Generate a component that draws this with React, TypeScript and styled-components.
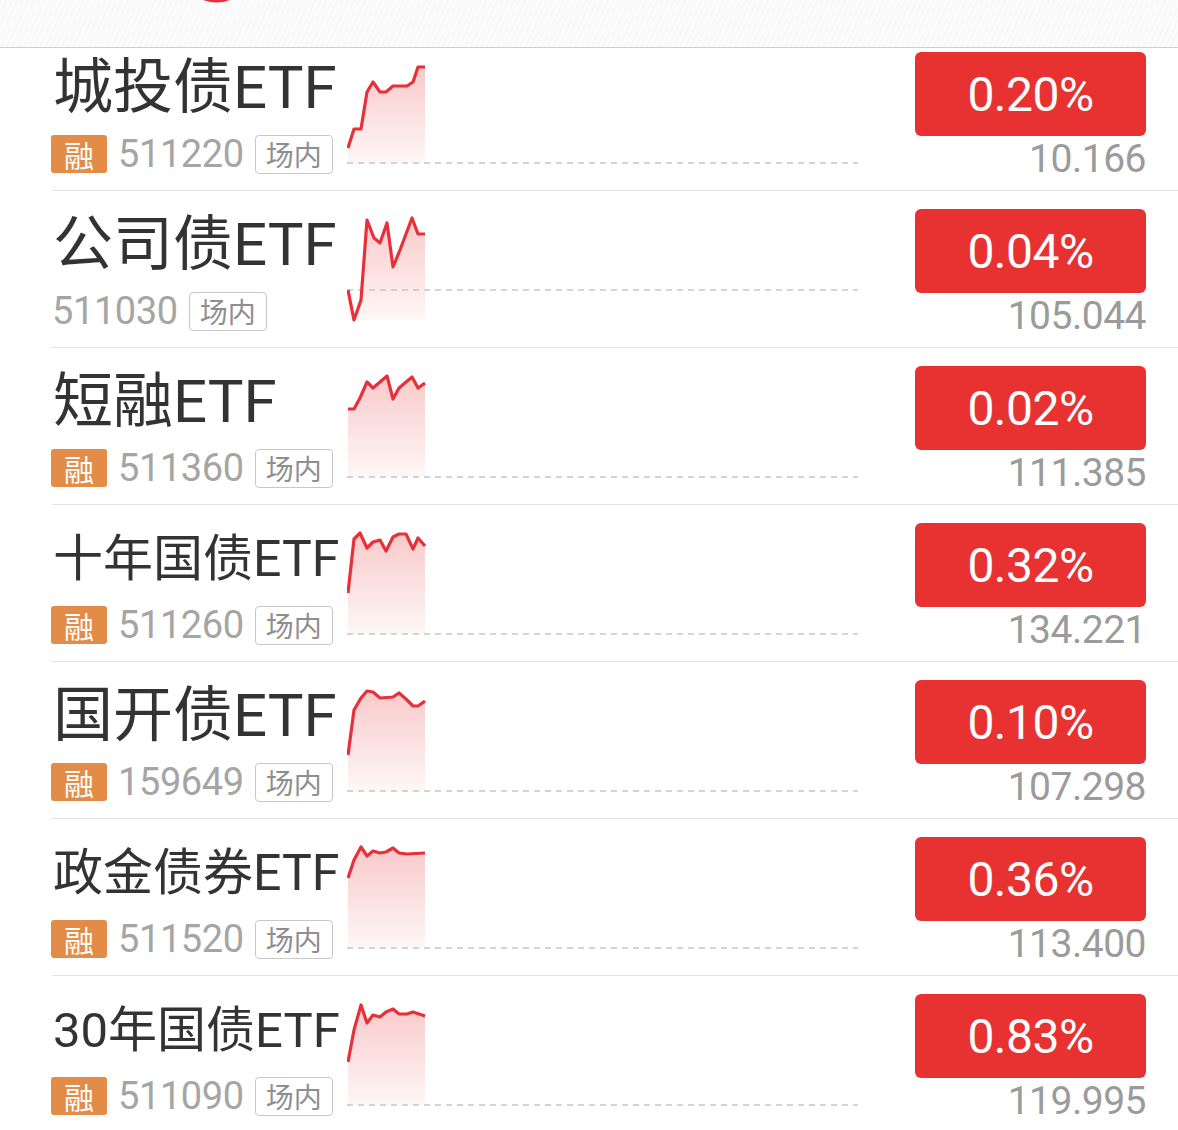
import React from 'react';
import styled, {createGlobalStyle} from 'styled-components';

const GlobalStyle = createGlobalStyle`
  html, body {
    margin: 0;
    padding: 0;
    background: #ffffff;
    overflow: hidden;
  }
  body {
    font-family: Roboto, 'Noto Sans CJK SC', sans-serif;
  }
`;

const Page = styled.div`
  width: 1178px;
  height: 1130px;
  overflow: hidden;
  display: flex;
  flex-direction: column;
  background: #fff;
`;

const Header = styled.div`
  flex-shrink: 0;
  height: 47px;
  border-bottom: 1px solid #cfcfcf;
  padding-left: 203px;
  background-color: #fcfcfc;
  background-image: repeating-linear-gradient(115deg, rgba(0, 0, 0, 0.012) 0, rgba(0, 0, 0, 0.012) 2px, transparent 2px, transparent 5px);
`;

const Viewport = styled.div`
  flex: 1;
  overflow: hidden;
`;

const List = styled.div`
  margin-top: -14px;
  margin-left: 52px;
`;

const Row = styled.div`
  height: 156px;
  border-bottom: 1px solid #e3e3e3;
  display: grid;
  grid-template-columns: 295px 511px 1fr;
`;

const Left = styled.div`
  padding-top: 14px;
  display: flex;
  flex-direction: column;
`;

const Title = styled.div<{$size: number}>`
  height: 80px;
  display: flex;
  align-items: center;
  margin-left: 1px;
  font-size: ${p => p.$size}px;
  line-height: 1;
  color: #333333;
  white-space: nowrap;
`;

const CodeLine = styled.div`
  margin-top: 6px;
  height: 40px;
  display: flex;
  align-items: center;
  gap: 11px;
`;

const Badge = styled.span`
  width: 56px;
  height: 38px;
  border-radius: 3px;
  background: #e38c47;
  color: #fff;
  font-size: 30px;
  display: flex;
  align-items: center;
  justify-content: center;
  margin-left: -1px;
`;

const Code = styled.span`
  font-size: 38px;
  letter-spacing: -0.4px;
  color: #a5a5a5;
  line-height: 1;
`;

const Tag = styled.span`
  box-sizing: border-box;
  width: 78px;
  height: 39px;
  border: 1.5px solid #c8c8c8;
  border-radius: 4px;
  color: #8e8e8e;
  font-size: 28px;
  display: flex;
  align-items: center;
  justify-content: center;
`;

const ChartBox = styled.svg`
  display: block;
  width: 511px;
  height: 156px;
`;

const Right = styled.div`
  padding-top: 18px;
  padding-right: 32px;
  display: flex;
  flex-direction: column;
  align-items: flex-end;
`;

const Change = styled.div`
  width: 231px;
  height: 84px;
  border-radius: 6px;
  background: #e83232;
  color: #fff;
  font-size: 48px;
  letter-spacing: -0.5px;
  display: flex;
  align-items: center;
  justify-content: center;
`;

const Price = styled.div`
  margin-top: 1px;
  font-size: 39px;
  line-height: 44px;
  letter-spacing: -0.5px;
  color: #9b9b9b;
`;

type Item = {
  name: string;
  size: number;
  code: string;
  margin: boolean;
  change: string;
  price: string;
  base: number;
  pts: [number, number][];
};

const items: Item[] = [
  {
    name: '城投债ETF', size: 60, code: '511220', margin: true, change: '0.20%', price: '10.166', base: 129,
    pts: [[0, 114], [6, 95], [13, 95], [19, 58], [25, 48], [32, 58], [38, 58], [45, 52], [59, 52], [65, 48], [70, 33], [77, 33]],
  },
  {
    name: '公司债ETF', size: 60, code: '511030', margin: false, change: '0.04%', price: '105.044', base: 99,
    pts: [[0, 99], [6, 129], [13, 109], [19, 29], [26, 47], [32, 52], [39, 32], [45, 76], [52, 59], [64, 27], [70, 43], [77, 43]],
  },
  {
    name: '短融ETF', size: 60, code: '511360', margin: true, change: '0.02%', price: '111.385', base: 129,
    pts: [[0, 61], [6, 61], [12, 50], [19, 34], [25, 40], [32, 34], [39, 28], [45, 51], [51, 40], [64, 29], [70, 40], [77, 35]],
  },
  {
    name: '十年国债ETF', size: 50, code: '511260', margin: true, change: '0.32%', price: '134.221', base: 129,
    pts: [[0, 88], [6, 34], [12, 28], [19, 43], [25, 37], [32, 35], [38, 46], [45, 32], [51, 29], [58, 29], [65, 44], [70, 33], [77, 41]],
  },
  {
    name: '国开债ETF', size: 60, code: '159649', margin: true, change: '0.10%', price: '107.298', base: 129,
    pts: [[0, 93], [6, 48], [13, 36], [19, 29], [25, 30], [32, 36], [45, 35], [51, 31], [58, 37], [65, 44], [70, 44], [77, 39]],
  },
  {
    name: '政金债券ETF', size: 50, code: '511520', margin: true, change: '0.36%', price: '113.400', base: 129,
    pts: [[0, 59], [6, 41], [13, 28], [19, 37], [25, 32], [32, 34], [38, 33], [45, 29], [51, 34], [59, 35], [77, 34]],
  },
  {
    name: '30年国债ETF', size: 49, code: '511090', margin: true, change: '0.83%', price: '119.995', base: 129,
    pts: [[0, 86], [6, 54], [13, 29], [19, 47], [25, 39], [32, 41], [38, 36], [45, 33], [51, 38], [59, 38], [65, 36], [77, 40]],
  },
];

const Spark: React.FC<{pts: [number, number][]; base: number; id: string}> = ({pts, base, id}) => {
  const line = pts.map(([x, y], i) => `${i ? 'L' : 'M'}${x + 1} ${y}`).join(' ');
  const last = pts[pts.length - 1];
  const area = `${line} L${last[0] + 1} 129 L1 129 Z`;
  return (
    <ChartBox viewBox="0 0 511 156">
      <defs>
        <linearGradient id={id} x1="0" y1="0" x2="0" y2="1">
          <stop offset="0" stopColor="#e83232" stopOpacity="0.26" />
          <stop offset="1" stopColor="#e83232" stopOpacity="0.04" />
        </linearGradient>
      </defs>
      <path d={area} fill={`url(#${id})`} />
      <line x1="0" y1={base} x2="511" y2={base} stroke="#c6c6c6" strokeWidth="1.6" strokeDasharray="6 5" />
      <path d={line} fill="none" stroke="#e8303a" strokeWidth="3.2" strokeLinejoin="round" />
    </ChartBox>
  );
};

const App: React.FC = () => {
  return (
    <Page>
      <GlobalStyle />
      <Header>
        <svg width="27" height="3" viewBox="0 0 27 3" style={{display: 'block'}}>
          <path d="M0 0 Q13.5 5 27 0 Z" fill="#e8303a" />
        </svg>
      </Header>
      <Viewport>
        <List>
          {items.map((it, i) => (
            <Row key={it.code}>
              <Left>
                <Title $size={it.size}>{it.name}</Title>
                <CodeLine>
                  {it.margin && <Badge>融</Badge>}
                  <Code>{it.code}</Code>
                  <Tag>场内</Tag>
                </CodeLine>
              </Left>
              <Spark pts={it.pts} base={it.base} id={`g${i}`} />
              <Right>
                <Change>{it.change}</Change>
                <Price>{it.price}</Price>
              </Right>
            </Row>
          ))}
        </List>
      </Viewport>
    </Page>
  );
};

export default App;
